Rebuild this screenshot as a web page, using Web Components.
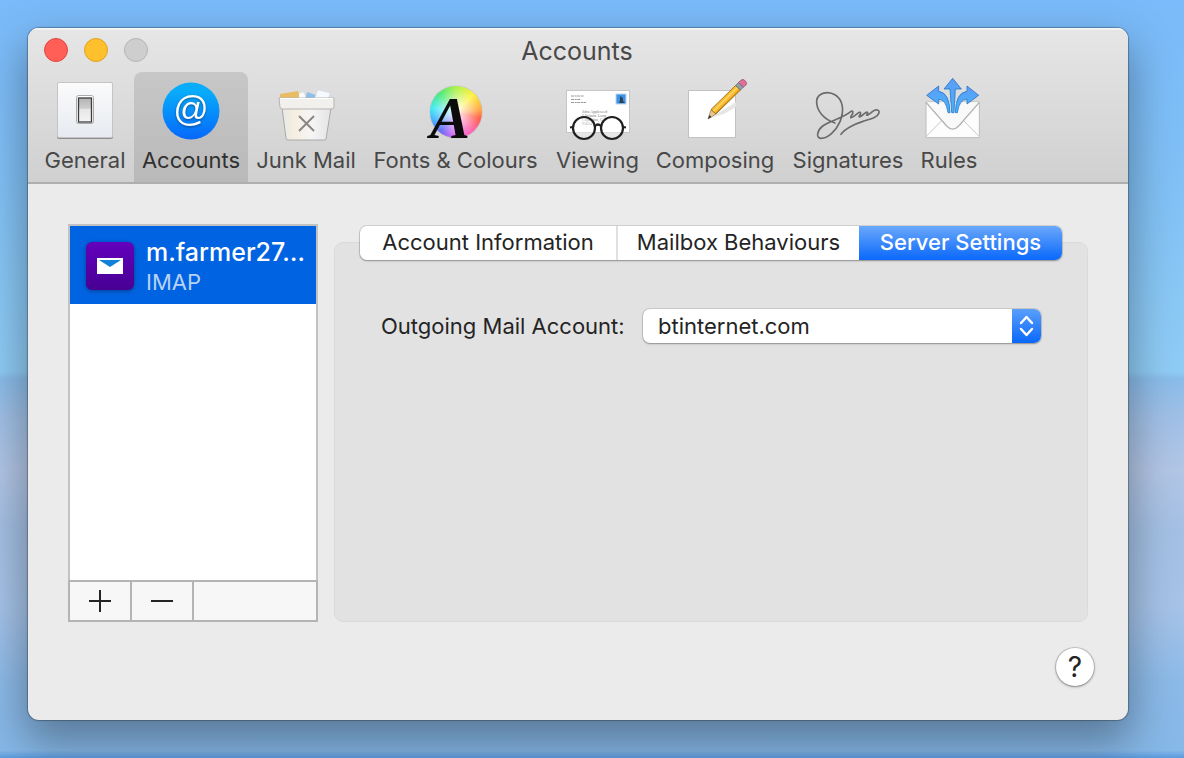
<!DOCTYPE html>
<html lang="en-GB">
<head>
<meta charset="utf-8">
<meta name="viewport" content="width=device-width, initial-scale=1">
<title>Accounts</title>
<style>
  html, body { margin: 0; }
  body { font: 22px/28px Inter, "Liberation Sans", sans-serif; color: #242424; }
</style>
</head>
<body>
<mail-preferences></mail-preferences>

<template id="t-window">
  <style>
    :host { display: flex; flex-direction: column; border-radius: 11px; background: #ebebeb; overflow: hidden;
      box-shadow: 0 0 1px 1px rgba(0,0,0,.28), 0 20px 44px 4px rgba(0,0,0,.34); }
    header { background: linear-gradient(#e7e6e7, #d0d0d0); border-bottom: 2px solid #aeaeae; box-shadow: inset 0 2px #f3f3f3; }
    .bar { display: grid; grid-template-columns: 120px 1fr 120px; align-items: center; height: 44px; padding: 2px 18px 0 16px; box-sizing: border-box; }
    .lights { display: flex; gap: 16px; margin-top: -2px; }
    .lights button { width: 24px; height: 24px; padding: 0; border-radius: 50%; border: 1px solid #e2463f; background: #ff5f57; }
    .lights button:nth-child(2) { border-color: #e0a028; background: #ffc02e; }
    .lights button:nth-child(3) { border-color: #b4b4b4; background: #cecece; }
    h1 { margin: 0; font: inherit; font-size: 25px; text-align: center; color: #484848; }
    nav { display: grid; grid-template-columns: 98px 114px 116px 183px 101px 134px 132px 70px; padding: 0 8px; }
    main { display: block; padding: 40px; padding-bottom: 34px; }
  </style>
  <header>
    <div class="bar">
      <div class="lights"><button aria-label="Close"></button><button aria-label="Minimise"></button><button aria-label="Zoom" disabled></button></div>
      <h1></h1>
    </div>
    <nav><slot name="tool"></slot></nav>
  </header>
  <main><slot></slot></main>
</template>

<template id="t-tool">
  <style>
    :host { display: block; }
    button { display: flex; flex-direction: column; align-items: center; gap: 4px; width: 100%; height: 110px; box-sizing: border-box;
      padding: 6px 0 8px; border: 0; border-radius: 8px 8px 0 0; background: none; font: inherit; color: #484848; white-space: nowrap; }
    :host([selected]) button { background: linear-gradient(#c7c7c7, #b9b9b9); color: #303030; }
    .icon { display: block; width: 64px; height: 64px; }
  </style>
  <button><span class="icon"><slot name="icon"></slot></span><span><slot></slot></span></button>
</template>

<template id="t-list">
  <style>
    :host { display: flex; flex-direction: column; width: 250px; min-height: 398px; box-sizing: border-box; flex: none; }
    .rows { flex: 1; border: 2px solid #c2c2c2; border-bottom: 0; background: #fff; }
    .foot { display: flex; height: 42px; box-sizing: border-box; border: 2px solid #b4b4b4; background: #f7f7f7; }
    button { display: grid; place-items: center; width: 62px; padding: 0; border: 0; border-right: 2px solid #b4b4b4; background: none; }
    svg { width: 22px; height: 22px; display: block; }
  </style>
  <div class="rows"><slot></slot></div>
  <div class="foot">
    <button aria-label="Add account"><svg viewBox="0 0 22 22"><path d="M0 11H22M11 0V22" stroke="#242424" stroke-width="2"/></svg></button>
    <button aria-label="Remove account"><svg viewBox="0 0 22 22"><path d="M0 11H22" stroke="#242424" stroke-width="2"/></svg></button>
  </div>
</template>

<template id="t-account">
  <style>
    :host { display: flex; align-items: center; gap: 12px; height: 78px; box-sizing: border-box; padding: 2px 12px 0 16px; background: #0063e1; color: #fff; }
    svg { width: 48px; height: 48px; flex: none; display: block; filter: drop-shadow(0 1px 2px rgba(0,0,0,.35)); }
    .name { font-size: 25px; line-height: 32px; font-weight: 500; white-space: nowrap; }
    .kind { color: #b8d2f7; }
  </style>
  <svg viewBox="0 0 48 48" aria-hidden="true">
    <defs><linearGradient id="p" x2="0" y2="1"><stop stop-color="#6300bd"/><stop offset="1" stop-color="#480093"/></linearGradient></defs>
    <rect width="48" height="48" rx="6" fill="url(#p)"/>
    <path d="M11 16H37V32H11z" fill="#fff"/><path d="M13 18H35L24 25z" fill="#1080d8"/>
  </svg>
  <div><div class="name"><slot></slot></div><div class="kind"><slot name="kind"></slot></div></div>
</template>

<template id="t-tabs">
  <style>
    :host { display: grid; grid-template-columns: 256px 243px 203px; height: 34px; border-radius: 7px; background: #fff; box-shadow: 0 0 0 1px rgba(0,0,0,.1), 0 1px 2px rgba(0,0,0,.3); }
    ::slotted(button) { margin: 0; padding: 0 0 2px; border: 0; border-left: 2px solid #e0e0e0; background: none; font: inherit; color: #242424; white-space: nowrap; }
    ::slotted(button:first-child) { border-left: 0; }
    ::slotted(button[aria-selected="true"]) { border-left: 0; border-radius: 0 7px 7px 0; background: linear-gradient(#6aa8fb, #0a68fb); color: #fff; font-weight: 500; }
  </style>
  <slot></slot>
</template>

<template id="t-group">
  <style>
    :host { display: flex; flex-direction: column; align-items: center; flex: 1; margin-top: 18px; box-sizing: border-box; border: 1px solid #dadada; border-radius: 9px; background: #e2e2e2; }
    .tabs { margin-top: -17px; }
    .body { align-self: stretch; padding: 49px 46px; }
  </style>
  <div class="tabs"><slot name="tabs"></slot></div>
  <div class="body"><slot></slot></div>
</template>

<template id="t-popup">
  <style>
    :host { display: flex; align-items: center; justify-content: space-between; gap: 16px; }
    label { white-space: nowrap; }
    .box { display: grid; width: 398px; height: 34px; border-radius: 7px; background: #fff; box-shadow: 0 0 0 1px rgba(0,0,0,.1), 0 1px 2px rgba(0,0,0,.3); }
    select, svg { grid-area: 1 / 1; }
    select { appearance: none; border: 0; margin: 0; padding: 0 40px 0 15px; background: none; font: inherit; color: inherit; width: 100%; }
    svg { justify-self: end; width: 29px; height: 34px; pointer-events: none; border-radius: 0 7px 7px 0; background: linear-gradient(#5a9ffb, #0a68fb); }
  </style>
  <label for="s"></label>
  <div class="box">
    <select id="s"></select>
    <svg viewBox="0 0 29 34" fill="none" stroke="#fff" stroke-width="2.4" stroke-linecap="round" stroke-linejoin="round"><path d="M9 14L14.500 8L20 14M9 20L14.500 26L20 20"/></svg>
  </div>
</template>

<template id="t-help">
  <style>
    :host { display: block; }
    button { width: 38px; height: 38px; padding: 0; border: 0; border-radius: 50%; background: #fff; font: inherit; font-size: 28px; color: #242424; box-shadow: 0 0 0 1px rgba(0,0,0,.15), 0 1px 3px rgba(0,0,0,.35); }
  </style>
  <button aria-label="Help">?</button>
</template>

<template id="t-app">
  <style>
    :host { display: block; min-height: 100vh; box-sizing: border-box; padding: 28px 56px 38px 28px;
      background: linear-gradient(#7abafa, #80c0f6 22%, #8fccf5 49%, #8abcea 50%, #a0c0e6 55%, #b2c6e6 62%, #a4c0e4 70%, #a6c3e8 80%, #8cbae8 90%, #86b8e8 99%, #5a9ade 100%); }
    .cols { display: flex; gap: 16px; align-items: stretch; }
    .help { display: flex; justify-content: flex-end; padding-top: 26px; margin-right: -6px; }
    svg, .fonts { display: block; width: 64px; height: 64px; overflow: visible; }
    .fonts { display: grid; }
    .fonts > * { grid-area: 1 / 1; }
    .wheel { width: 52px; height: 52px; margin: 8px 0 0 6px; border-radius: 50%; box-shadow: 0 0 1px rgba(0,0,0,.4);
      background: radial-gradient(circle, #fff 0, rgba(255,255,255,.75) 6px, rgba(255,255,255,.1) 24px), conic-gradient(#a4f03c, #fff02c 45deg, #ff9a30 85deg, #ff5038 105deg, #ff58a8 140deg, #e85cf0 180deg, #5a5cf4 218deg, #30a8ff 250deg, #30e8f0 280deg, #3ce868 320deg, #a4f03c); }
  </style>
  <mac-window heading="Accounts">
    <tool-item slot="tool">General
      <svg slot="icon" viewBox="0 0 64 64" aria-hidden="true">
        <defs><linearGradient id="g1" x2="0" y2="1"><stop stop-color="#fbfbfb"/><stop offset="1" stop-color="#e6eaf0"/></linearGradient>
        <linearGradient id="g2" x2="0" y2="1"><stop stop-color="#b4b4b4"/><stop offset=".42" stop-color="#cccccc"/><stop offset=".48" stop-color="#e6e6e6"/><stop offset="1" stop-color="#f4f4f4"/></linearGradient></defs>
        <rect x="4" y="5" width="56" height="56" rx="2" fill="#8d8d8d"/><rect x="4.500" y="4.500" width="55" height="55" rx="1.500" fill="url(#g1)" stroke="#c4c4c6"/>
        <rect x="23.500" y="17.500" width="17" height="28" rx="2" fill="#fff" stroke="#aaa"/><rect x="25.500" y="20" width="13" height="24" fill="url(#g2)" stroke="#3c3c3c" stroke-width="1.300"/>
      </svg>
    </tool-item>
    <tool-item slot="tool" selected>Accounts
      <svg slot="icon" viewBox="0 0 64 64" aria-hidden="true">
        <defs><linearGradient id="a1" x2="0" y2="1"><stop offset=".15" stop-color="#08acfb"/><stop offset="1" stop-color="#0668fa"/></linearGradient></defs>
        <circle cx="32" cy="33" r="28.500" fill="url(#a1)"/>
        <text x="32" y="43" text-anchor="middle" font-family="Liberation Sans" font-size="35" fill="#fff" style="filter:drop-shadow(0 1px 1px rgba(0,0,0,.4))">@</text>
      </svg>
    </tool-item>
    <tool-item slot="tool">Junk Mail
      <svg slot="icon" viewBox="0 0 64 64" aria-hidden="true">
        <defs><linearGradient id="j1"><stop stop-color="#e8e8e8"/><stop offset=".25" stop-color="#f6efe0"/><stop offset=".6" stop-color="#f5f5f5"/><stop offset="1" stop-color="#e4e4e4"/></linearGradient></defs>
        <path d="M6 16L24 13L27 22H6z" fill="#e9bb63"/><path d="M25 16L29 14L33 22H25z" fill="#fafafa"/><path d="M33 14L42 17L39 22H31z" fill="#8fbfe6"/><path d="M44 12L56 15L54 22H40z" fill="#f6fafe" stroke="#ccdbe8" stroke-width=".5"/>
        <path d="M8 30H57L52 61Q52 62 50 62H14Q12 62 12 60z" fill="url(#j1)" stroke="#a9a9a9"/>
        <path d="M5 20H60V29Q60 31 57 31H8Q6 31 6 29z" fill="#f2f0ec" stroke="#b4b4b4"/><path d="M6 20.500H59" stroke="#fff"/>
        <path d="M25 38L40 53M40 38L25 53" stroke="#8a8782" stroke-width="2"/>
      </svg>
    </tool-item>
    <tool-item slot="tool">Fonts &amp; Colours
      <div slot="icon" class="fonts" aria-hidden="true"><div class="wheel"></div><svg viewBox="0 0 64 64"><text x="6" y="60" font-family="Liberation Serif" font-weight="bold" font-style="italic" font-size="60" fill="#0c0c0c">A</text></svg></div>
    </tool-item>
    <tool-item slot="tool">Viewing
      <svg slot="icon" viewBox="0 0 64 64" aria-hidden="true">
        <rect x=".5" y="12.500" width="63" height="42" fill="#fff" stroke="#c6c6c6"/>
        <path d="M5 18H18M5 21.500H15M5 24.500H20" stroke="#999" stroke-dasharray="3 .7 2 .5"/>
        <g font-family="Liberation Serif" font-size="4" fill="#777"><text x="16" y="35">John Appleseed</text><text x="16" y="39">1 Infinite Loop</text><text x="16" y="43">Cupertino, CA</text><text x="16" y="47">95014</text></g>
        <rect x="50" y="16" width="10" height="10" fill="#3c93e6" stroke="#bdd5ee"/><path d="M54 18L57 20V23L59 25H53L54 22z" fill="#2c4257"/>
        <g fill="rgba(255,255,255,.4)" stroke="#202020" stroke-width="2.200"><circle cx="18" cy="50" r="11"/><circle cx="46" cy="50" r="11"/><path fill="none" d="M29 48Q32 45 35 48M7 49L4 49.500M57 49L60 49.500"/></g>
      </svg>
    </tool-item>
    <tool-item slot="tool">Composing
      <svg slot="icon" viewBox="0 0 64 64" aria-hidden="true">
        <rect x="5.500" y="12.500" width="47" height="47" fill="#fff" stroke="#c2c2c2"/>
        <path d="M27 40L53 24V29L41 36z" fill="#e6e6e6"/>
        <path d="M25 41L28 31.500L33 36z" fill="#e8c795" stroke="#8a6a35" stroke-width=".6"/><path d="M25 41L26.500 37L28.500 39z" fill="#333"/>
        <path d="M28 31.500L52.500 7.500L57.500 12L33 36z" fill="#f8b92d" stroke="#8b641a" stroke-width=".8"/><path d="M30.500 33L54.500 9.500" stroke="#ffd765" stroke-width="1.600"/><path d="M32.500 35.500L57 11.500" stroke="#c78116"/>
        <path d="M52.500 7.500L55.500 4.500L60.500 9L57.500 12z" fill="#8ea0a8" stroke="#4e5b60" stroke-width=".6"/>
        <path d="M55.500 4.500L57.500 2.500Q60 0 62.500 3Q64.500 5.500 63 7L60.500 9z" fill="#e0709a" stroke="#91405d" stroke-width=".6"/>
      </svg>
    </tool-item>
    <tool-item slot="tool">Signatures
      <svg slot="icon" viewBox="108 24 192 192" fill="none" stroke="#6b6b6b" stroke-width="5" stroke-linecap="round" stroke-linejoin="round" aria-hidden="true">
        <path d="M165 159C132 148 108 122 110 92C113 67 145 62 166 75C190 90 193 123 180 155C168 183 143 206 122 205C106 202 113 180 128 168C150 151 185 147 212 125C219 120 222 127 214 137C207 150 220 140 233 130C241 124 245 127 239 136C233 145 244 139 253 131C261 124 266 126 261 133C257 140 268 133 278 124C288 117 299 119 297 128C294 142 273 147 249 154C222 162 193 179 183 193"/>
      </svg>
    </tool-item>
    <tool-item slot="tool">Rules
      <svg slot="icon" viewBox="411 24 192 192" aria-hidden="true">
        <defs><linearGradient id="r1" x2="0" y2="1"><stop stop-color="#5b9df6"/><stop offset="1" stop-color="#46b5fa"/></linearGradient></defs>
        <path d="M438 96H598V203H438z" fill="#fdfdfd" stroke="#bcbcbc" stroke-width="3"/>
        <path d="M438 200L489 148M598 200L547 148" stroke="#c8c8c8" stroke-width="3"/>
        <path d="M438 97L500 168Q518 187 536 168L598 97" fill="#f9f9f9" stroke="#b2b2b2" stroke-width="4"/>
        <g fill="url(#r1)" stroke="#2d76c8" stroke-width="2.500" stroke-linejoin="round">
          <path d="M518 25L544 57H526L522 128H515L510 57H492z"/>
          <path d="M440 76L476 48V64Q509 68 510 128H504Q498 87 476 88V102z"/>
          <path d="M596 76L561 48V64Q527 68 526 128H532Q538 87 561 88V102z"/>
        </g>
      </svg>
    </tool-item>

    <div class="cols">
      <account-list>
        <account-row>m.farmer27…<span slot="kind">IMAP</span></account-row>
      </account-list>
      <group-box>
        <segmented-tabs slot="tabs" role="tablist">
          <button role="tab" aria-selected="false">Account Information</button>
          <button role="tab" aria-selected="false">Mailbox Behaviours</button>
          <button role="tab" aria-selected="true">Server Settings</button>
        </segmented-tabs>
        <popup-field label="Outgoing Mail Account:" value="btinternet.com"></popup-field>
      </group-box>
    </div>
    <div class="help"><help-button></help-button></div>
  </mac-window>
</template>

<script>
  class Base extends HTMLElement {
    constructor() {
      super();
      const t = document.getElementById(this.constructor.template);
      this.attachShadow({ mode: 'open' }).append(t.content.cloneNode(true));
    }
  }
  const define = (name, template) => {
    const C = class extends Base {};
    C.template = template;
    customElements.define(name, C);
  };
  customElements.define('mac-window', class extends Base {
    static template = 't-window';
    connectedCallback() { this.shadowRoot.querySelector('h1').textContent = this.getAttribute('heading'); }
  });
  customElements.define('popup-field', class extends Base {
    static template = 't-popup';
    connectedCallback() {
      this.shadowRoot.querySelector('label').textContent = this.getAttribute('label');
      this.shadowRoot.querySelector('select').replaceChildren(new Option(this.getAttribute('value')));
    }
  });
  define('tool-item', 't-tool');
  define('account-list', 't-list');
  define('account-row', 't-account');
  define('segmented-tabs', 't-tabs');
  define('group-box', 't-group');
  define('help-button', 't-help');
  define('mail-preferences', 't-app');
</script>
</body>
</html>
